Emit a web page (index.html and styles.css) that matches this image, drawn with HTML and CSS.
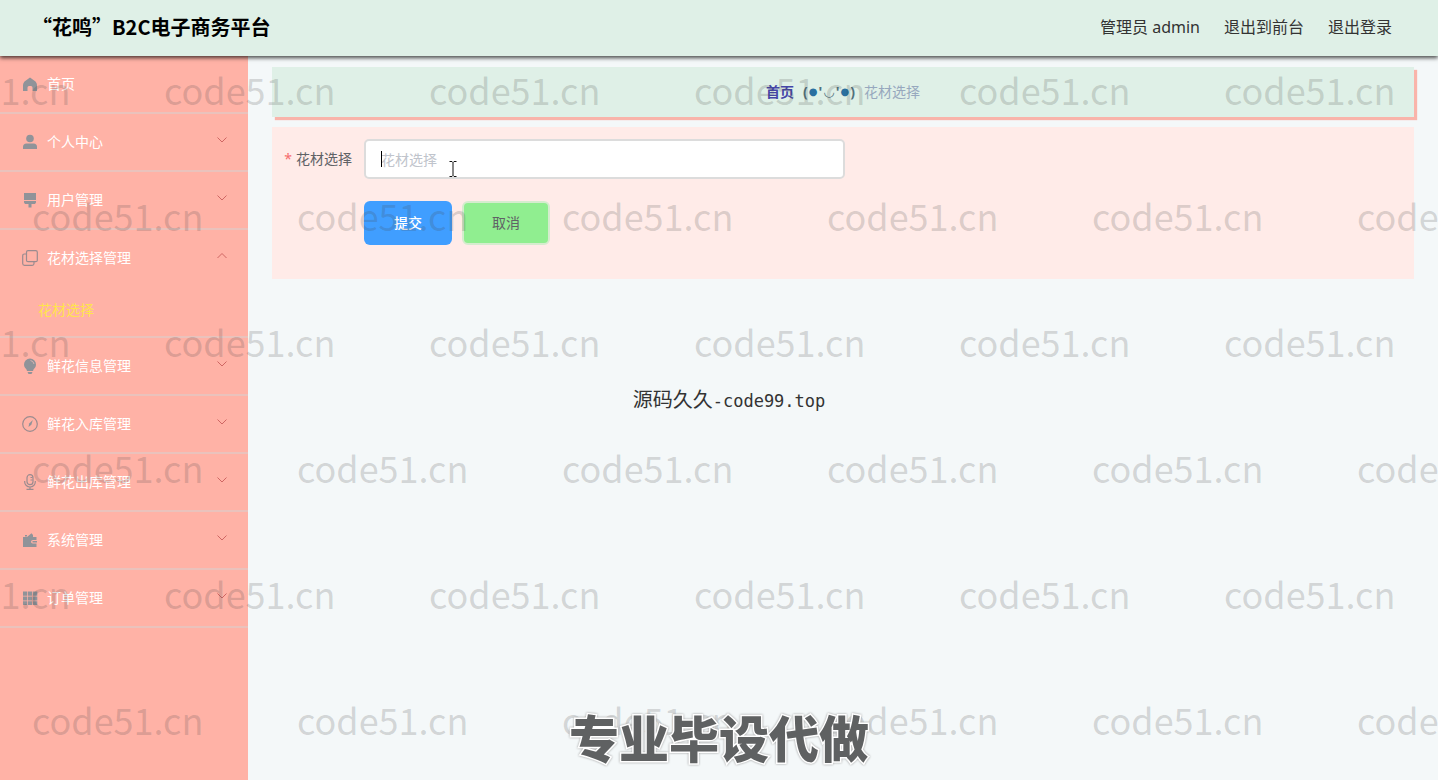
FILE: index.html
```html
<!DOCTYPE html>
<html lang="zh-CN">
<head>
<meta charset="utf-8">
<title>“花鸣”B2C电子商务平台</title>
<link rel="stylesheet" href="styles.css">
</head>
<body>
<header class="topbar">
  <h1 class="brand">“花鸣”B2C电子商务平台</h1>
  <nav class="account">
    <span>管理员 admin</span>
    <a href="#">退出到前台</a>
    <a href="#">退出登录</a>
  </nav>
</header>
<div class="layout">
  <nav class="sidebar">
    <ul class="menu">
      <li class="menu-item"><a class="menu-link" href="#">
        <svg class="icon" viewBox="0 0 16 16"><path d="M8 1.500 2.500 5.500Q1 7 1 9v6h4.500v-3.500q0-1.500 1.500-1.500h2q1.500 0 1.500 1.500V15H15V9q0-2-1.500-3.500z"/></svg>
        <span>首页</span></a></li>
      <li class="menu-item"><button class="menu-link" type="button">
        <svg class="icon" viewBox="0 0 16 16"><circle cx="8" cy="4.500" r="3.800"/><path d="M1 15v-2q0-3.500 3.500-3.500h7Q15 9.500 15 13v2z"/></svg>
        <span>个人中心</span><svg class="arrow" viewBox="0 0 12 12"><path d="m1.500 3.500 4.500 4.500 4.500-4.500"/></svg></button></li>
      <li class="menu-item"><button class="menu-link" type="button">
        <svg class="icon" viewBox="0 0 16 16"><path d="M2 1h12v7H2zM2 9h12v1.500L13 12H9.500v3.500h-3V12H3L2 10.500z"/></svg>
        <span>用户管理</span><svg class="arrow" viewBox="0 0 12 12"><path d="m1.500 3.500 4.500 4.500 4.500-4.500"/></svg></button></li>
      <li class="menu-item"><button class="menu-link" type="button">
        <svg class="icon line" viewBox="0 0 16 16"><rect x="4.500" y=".7" width="10.800" height="11" rx="1.500"/><path d="M4.500 4H2.500Q.7 4 .7 5.800v7.700q0 1.800 1.800 1.800h7.700q1.800 0 1.800-1.800v-1.800"/></svg>
        <span>花材选择管理</span><svg class="arrow" viewBox="0 0 12 12"><path d="M1.500 8 6 3.500 10.500 8"/></svg></button>
        <ul class="submenu"><li><a class="submenu-link" href="#">花材选择</a></li></ul></li>
      <li class="menu-item"><button class="menu-link" type="button">
        <svg class="icon" viewBox="0 0 16 16"><path d="M8 .5a6 6 0 0 1 6 6c0 2.500-1.500 3.500-2.500 5l-.5 1.500H5l-.5-1.500C3.500 10 2 9 2 6.500a6 6 0 0 1 6-6M5.500 14h5l-1 2h-3z"/><path class="shine" d="M8.500 2.500q3 .5 3.500 3.500"/></svg>
        <span>鲜花信息管理</span><svg class="arrow" viewBox="0 0 12 12"><path d="m1.500 3.500 4.500 4.500 4.500-4.500"/></svg></button></li>
      <li class="menu-item"><button class="menu-link" type="button">
        <svg class="icon line" viewBox="0 0 16 16"><circle cx="8" cy="8" r="7.300"/><path class="solid" d="M10.800 4 9.300 8.700 6.500 11l.7-3.500z"/></svg>
        <span>鲜花入库管理</span><svg class="arrow" viewBox="0 0 12 12"><path d="m1.500 3.500 4.500 4.500 4.500-4.500"/></svg></button></li>
      <li class="menu-item"><button class="menu-link" type="button">
        <svg class="icon line" viewBox="0 0 16 16"><rect x="5" y=".7" width="6" height="10" rx="3"/><path d="M2.700 7v1a5.300 5 0 0 0 10.600 0V7M8 13v2.300M4.500 15.300h7M8.500 3.500h2M8.500 6h2"/></svg>
        <span>鲜花出库管理</span><svg class="arrow" viewBox="0 0 12 12"><path d="m1.500 3.500 4.500 4.500 4.500-4.500"/></svg></button></li>
      <li class="menu-item"><button class="menu-link" type="button">
        <svg class="icon" viewBox="0 0 16 16"><path d="M1 5h4l4.500-3.700L11 3v2h3.500v3H11q-2 0-2 1.800T11 11.500h3.500V15H1zM3 3h2v1.500H3z"/><rect x="10.500" y="9" width="4.500" height="1.500"/></svg>
        <span>系统管理</span><svg class="arrow" viewBox="0 0 12 12"><path d="m1.500 3.500 4.500 4.500 4.500-4.500"/></svg></button></li>
      <li class="menu-item"><button class="menu-link" type="button">
        <svg class="icon" viewBox="0 0 16 16"><path d="M1 1.500h4.300V5.700H1zM6 1.500h4.300V5.700H6zM11 1.500h4.300V5.700H11zM1 6.400h4.300v4.200H1zM6 6.400h4.300v4.200H6zM11 6.400h4.300v4.200H11zM1 11.300h4.300V15H1zM6 11.300h4.300V15H6zM11 11.300h4.300V15H11z"/></svg>
        <span>订单管理</span><svg class="arrow" viewBox="0 0 12 12"><path d="m1.500 3.500 4.500 4.500 4.500-4.500"/></svg></button></li>
    </ul>
  </nav>
  <main class="content">
    <nav class="breadcrumb">
      <a class="crumb-home" href="#">首页</a>
      <span class="crumb-face">(<i>●</i>'<b>◡</b>'<i>●</i>)</span>
      <span class="crumb-current">花材选择</span>
    </nav>
    <form class="panel">
      <div class="field">
        <label class="field-label" for="material"><span class="required">*</span>花材选择</label>
        <div class="field-box">
          <input class="field-input" id="material" type="text" placeholder="花材选择">
          <span class="caret"></span>
          <svg class="pointer" viewBox="0 0 8 16"><path d="M.5 .5h2.500l1 1 1-1h2.500M4 1.500v13M.5 15.500h2.500l1-1 1 1h2.500"/></svg>
        </div>
      </div>
      <div class="actions">
        <button class="btn btn-submit" type="button">提交</button>
        <button class="btn btn-cancel" type="button">取消</button>
      </div>
    </form>
  </main>
</div>
<div class="watermark">
  <div class="mark-row"><span>code51.cn</span><span>code51.cn</span><span>code51.cn</span><span>code51.cn</span><span>code51.cn</span><span>code51.cn</span></div>
  <div class="mark-row mark-shift"><span>code51.cn</span><span>code51.cn</span><span>code51.cn</span><span>code51.cn</span><span>code51.cn</span><span>code51.cn</span></div>
  <div class="mark-row"><span>code51.cn</span><span>code51.cn</span><span>code51.cn</span><span>code51.cn</span><span>code51.cn</span><span>code51.cn</span></div>
  <div class="mark-row mark-shift"><span>code51.cn</span><span>code51.cn</span><span>code51.cn</span><span>code51.cn</span><span>code51.cn</span><span>code51.cn</span></div>
  <div class="mark-row"><span>code51.cn</span><span>code51.cn</span><span>code51.cn</span><span>code51.cn</span><span>code51.cn</span><span>code51.cn</span></div>
  <div class="mark-row mark-shift"><span>code51.cn</span><span>code51.cn</span><span>code51.cn</span><span>code51.cn</span><span>code51.cn</span><span>code51.cn</span></div>
</div>
<p class="source-note">源码久久<span>-code99.top</span></p>
<p class="promo">专业毕设代做</p>
</body>
</html>
```
FILE: styles.css
```css
* { box-sizing: border-box; }
body {
  margin: 0;
  min-height: 100vh;
  display: flex;
  flex-direction: column;
  position: relative;
  overflow: hidden;
  background: #f4f8f9;
  color: #333;
  font: 14px/20px "Noto Sans", "Noto Sans CJK SC", sans-serif;
}
a { color: inherit; text-decoration: none; }
ul { list-style: none; margin: 0; padding: 0; }
button, input { font: inherit; }

.topbar {
  height: 56px;
  display: flex;
  align-items: center;
  justify-content: space-between;
  padding: 0 46px 2px 32px;
  background: #dff0e7;
  box-shadow: 0 2px 4px rgba(0, 0, 0, .7);
  position: relative;
}
.brand {
  margin: 0;
  font: bold 20px/24px "Noto Sans CJK SC", sans-serif;
  color: #000;
}
.account { display: flex; gap: 24px; font-size: 16px; line-height: 24px; }

.layout { flex: 1; display: flex; }
.sidebar { width: 248px; flex: none; background: #ffb2a6; }
.menu-item { border-bottom: 2px solid #eac2bc; }
.menu-link {
  width: 100%;
  height: 56px;
  display: flex;
  align-items: center;
  gap: 9px;
  padding: 0 20px 0 22px;
  border: 0;
  background: none;
  color: #fff;
  text-align: left;
}
.icon { width: 16px; height: 16px; fill: #909399; flex: none; }
.line { fill: none; stroke: #9b8b8f; stroke-width: 1.2; }
.solid { fill: #909399; stroke: none; }
.shine { fill: none; stroke: #d5b3b0; stroke-width: 1; }
.arrow {
  width: 12px;
  height: 12px;
  margin: 0 0 4px auto;
  fill: none;
  stroke: #cf6663;
}
.submenu-link {
  display: block;
  padding: 14px 0 16px 38px;
  color: #ffe44d;
}

.content { flex: 1; min-width: 0; padding: 11px 24px; }
.breadcrumb {
  height: 50px;
  display: flex;
  align-items: center;
  justify-content: center;
  gap: 9px;
  margin-bottom: 10px;
  background: #dff0e7;
  box-shadow: 3px 3px 1px #f9b4aa;
}
.crumb-home { color: #4545a8; font-weight: bold; }
.crumb-face {
  display: flex;
  align-items: center;
  gap: 1px;
  color: #51717d;
  font-family: "Noto Sans", "DejaVu Sans", sans-serif;
  font-weight: bold;
}
.crumb-face i { color: #2a70a0; font: 10px/20px "DejaVu Sans", sans-serif; }
.crumb-face b { font: 13px/20px "DejaVu Sans", sans-serif; }
.crumb-current { color: #97a8be; }

.panel { padding: 12px 12px 34px; background: #ffebe8; }
.field { display: flex; margin-bottom: 22px; }
.field-label {
  width: 80px;
  padding-right: 12px;
  line-height: 40px;
  text-align: right;
  white-space: nowrap;
  color: #606266;
}
.required { margin-right: 4px; color: #f56c6c; }
.field-box { position: relative; width: 43%; }
.field-input {
  width: 100%;
  height: 40px;
  padding: 0 15px;
  border: 2px solid #dcdcdc;
  border-radius: 5px;
  background: #fff;
  color: #606266;
  outline: none;
}
.field-input::placeholder { color: #c0c4cc; }
.caret { position: absolute; left: 17px; top: 12px; width: 1px; height: 16px; background: #000; }
.pointer { position: absolute; left: 85px; top: 22px; width: 8px; height: 16px; fill: none; stroke: #111; }
.actions { display: flex; gap: 10px; padding-left: 80px; }
.btn { width: 88px; height: 44px; padding: 0; border-radius: 6px; }
.btn-submit { border: 0; background: #409eff; color: #fff; font-weight: 500; }
.btn-cancel { border: 2px solid #d5ecce; background: #90ee90; color: #606266; }

.watermark {
  position: absolute;
  inset: 0;
  overflow: hidden;
  pointer-events: none;
  padding-top: 62px;
  color: rgba(70, 70, 70, .2);
  font: 400 36px/54px "Noto Sans CJK SC", sans-serif;
}
.mark-row { display: flex; height: 126px; margin-left: -101px; }
.mark-shift { margin-left: 32px; }
.mark-row span { flex: none; width: 265px; }

.source-note, .promo {
  position: absolute;
  left: 0;
  right: 0;
  margin: 0;
  text-align: center;
  pointer-events: none;
}
.source-note { top: 385px; padding-left: 20px; font: 20px/28px "Noto Sans CJK SC", sans-serif; }
.source-note span { font: 17px/28px "DejaVu Sans Mono", monospace; }
.promo {
  bottom: 12px;
  font: 900 50px/64px "Noto Sans CJK SC", sans-serif;
  color: #5f6162;
  -webkit-text-stroke: 3px #fff;
  paint-order: stroke fill;
  filter: drop-shadow(0 0 1px #999);
}
```
